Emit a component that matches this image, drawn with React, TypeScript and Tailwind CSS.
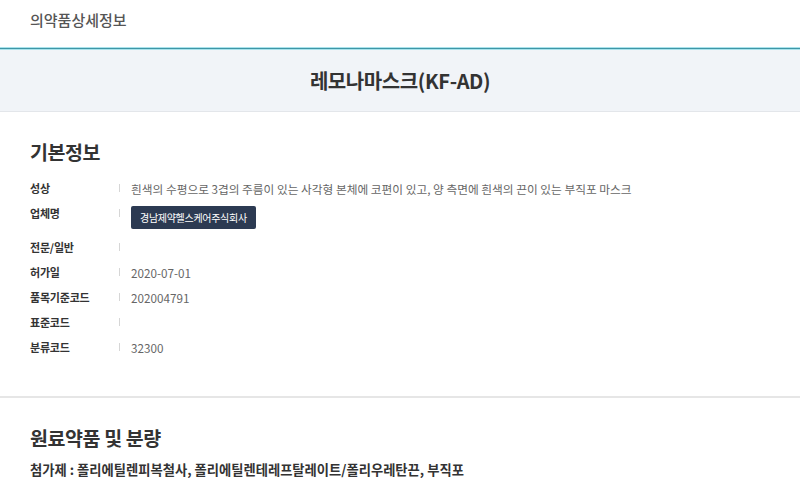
import React from "react";

const font = { fontFamily: '"Noto Sans CJK KR", "Noto Sans", sans-serif' };

function Sep() {
  return <span className="mt-[8.5px] h-[8px] w-px bg-[#d6d6d6] shrink-0" />;
}

function Row({ label, children, badge }: { label: string; children?: React.ReactNode; badge?: boolean }) {
  return (
    <div className={`flex ${badge ? "h-[34px]" : "h-[25px]"}`}>
      <div className="w-[89px] shrink-0 text-[11px] leading-[25px] font-bold text-[#333] tracking-[-0.2px]">{label}</div>
      <Sep />
      <div className="pl-[11px] text-[11.7px] leading-[25px] text-[#666]">{children}</div>
    </div>
  );
}

export default function App() {
  return (
    <div className="w-[800px] h-[500px] bg-white overflow-hidden" style={font}>
      <div className="h-[47px] flex items-center pl-[30px] pb-[6px] text-[15px] font-medium text-[#555]">
        의약품상세정보
      </div>
      <div className="h-px bg-[#a9e3ec]" />
      <div className="h-px bg-[#3f96a6]" />
      <div className="h-px bg-[#a9e3ec]" />
      <div className="h-[62px] bg-[#f1f4f8] border-b border-[#e3e6ea] flex items-center justify-center text-[20px] font-bold text-[#333] tracking-[-0.4px]">
        레모나마스크(KF-AD)
      </div>
      <div className="px-[30px] pt-[26px] h-[284px]">
        <h2 className="text-[19.5px] leading-[28px] font-bold text-[#333] tracking-[-0.4px] mb-[9.5px]">기본정보</h2>
        <Row label="성상">흰색의 수평으로 3겹의 주름이 있는 사각형 본체에 코편이 있고, 양 측면에 흰색의 끈이 있는 부직포 마스크</Row>
        <Row label="업체명" badge>
          <span className="inline-flex items-center mt-[5.5px] h-[23px] px-[9px] rounded-[2px] bg-[#2c3a52] text-white text-[10px] leading-none tracking-[-0.3px] align-top">
            경남제약헬스케어주식회사
          </span>
        </Row>
        <Row label="전문/일반" />
        <Row label="허가일">2020-07-01</Row>
        <Row label="품목기준코드">202004791</Row>
        <Row label="표준코드" />
        <Row label="분류코드">32300</Row>
      </div>
      <div className="h-[2px] bg-[#e6e6e6]" />
      <div className="px-[30px] pt-[26px]">
        <h2 className="text-[19.5px] leading-[28px] font-bold text-[#333] tracking-[-0.4px] mb-[8px]">원료약품 및 분량</h2>
        <p className="text-[13.3px] leading-[20px] font-bold text-[#333]">
          첨가제 : 폴리에틸렌피복철사, 폴리에틸렌테레프탈레이트/폴리우레탄끈, 부직포
        </p>
      </div>
    </div>
  );
}
